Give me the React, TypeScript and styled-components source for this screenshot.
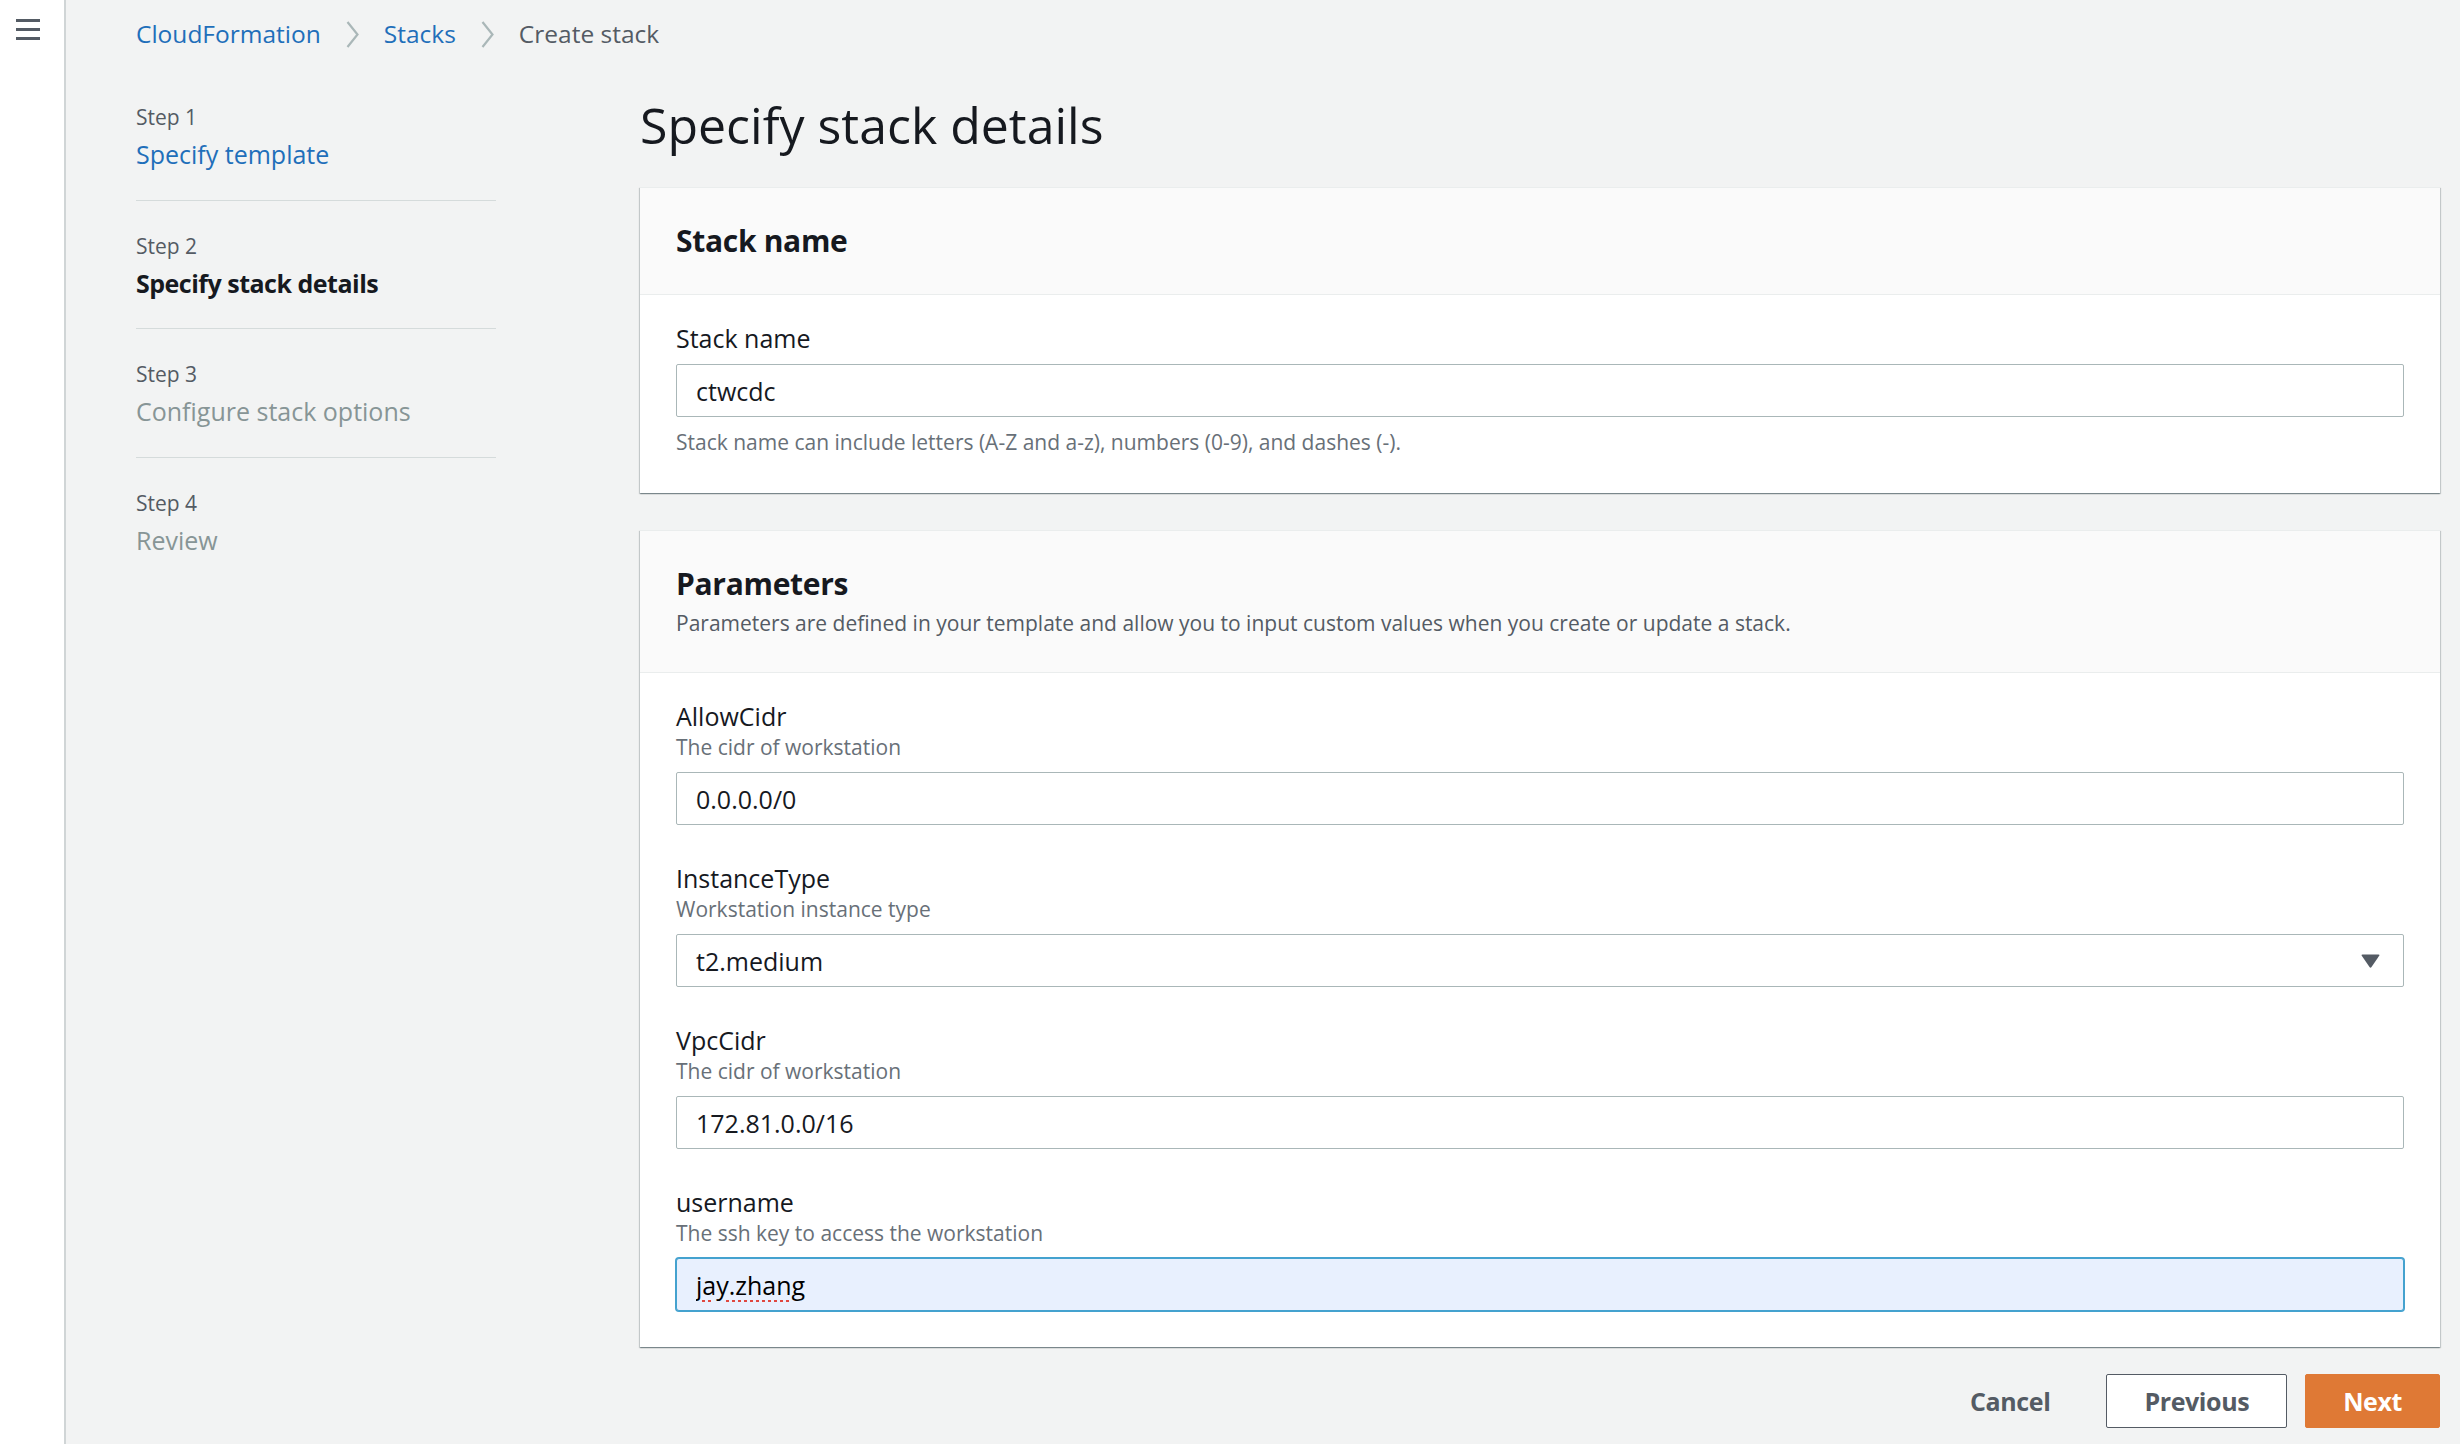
import React from 'react';
import styled, { createGlobalStyle, css } from 'styled-components';

const GlobalStyle = createGlobalStyle`
  html, body {
    margin: 0;
    padding: 0;
    background: #f2f3f3;
    overflow: hidden;
  }
  body {
    font-family: "Open Sans", "Noto Sans", "Liberation Sans", sans-serif;
    color: #16191f;
  }
  *, *::before, *::after { box-sizing: border-box; }
`;

const Shell = styled.div`
  display: flex;
  min-height: 100vh;
`;

const SideRail = styled.aside`
  flex: none;
  width: 66px;
  background: #ffffff;
  border-right: 2px solid #d0d5d6;
  padding: 18px 0 0 16px;
`;

const MenuButton = styled.button`
  display: block;
  padding: 0;
  margin: 0;
  border: 0;
  background: transparent;
  width: 24px;
  height: 22px;
  color: #545b64;
`;

const Main = styled.main`
  flex: 1;
  min-width: 0;
  padding: 16px 20px 0 70px;
`;

const Breadcrumbs = styled.nav`
  display: flex;
  align-items: center;
  gap: 25px;
  font-size: 24.5px;
  line-height: 36px;
  height: 36px;
`;

const Crumb = styled.a<{ $current?: boolean }>`
  text-decoration: none;
  color: ${(p) => (p.$current ? '#545b64' : '#1f6fba')};
`;

const Layout = styled.div`
  display: grid;
  grid-template-columns: 360px 1fr;
  column-gap: 144px;
  margin-top: 20px;
`;

const StepList = styled.ol`
  list-style: none;
  margin: 0;
  padding: 0;
`;

const StepItem = styled.li`
  padding: 29px 0 27.5px;
  border-bottom: 1px solid #d5dbdb;
  &:last-child { border-bottom: 0; }
`;

const StepLabel = styled.div`
  font-size: 21px;
  line-height: 32px;
  color: #545b64;
`;

type StepState = 'done' | 'current' | 'todo';

const StepTitle = styled.div<{ $state: StepState }>`
  margin-top: 3px;
  font-size: 25px;
  line-height: 36px;
  ${(p) =>
    p.$state === 'done'
      ? css`color: #1f6fba;`
      : p.$state === 'current'
      ? css`color: #16191f; font-weight: 700; letter-spacing: -0.5px;`
      : css`color: #879596;`}
`;

const Content = styled.section`
  min-width: 0;
`;

const PageTitle = styled.h1`
  margin: 25px 0 34px;
  font-size: 50px;
  line-height: 56px;
  font-weight: 400;
  color: #16191f;
`;

const Card = styled.div`
  background: #ffffff;
  border-top: 1px solid #eaeded;
  box-shadow: 0 1px 1px 0 rgba(0, 28, 36, 0.3), 1px 1px 1px 0 rgba(0, 28, 36, 0.15),
    -1px 1px 1px 0 rgba(0, 28, 36, 0.15);
  & + & { margin-top: 37px; }
`;

const CardHeader = styled.header`
  background: #fafafa;
  border-bottom: 1px solid #eaeded;
  padding: 33px 36px;
`;

const CardTitle = styled.h2`
  margin: 0;
  font-size: 30px;
  line-height: 40px;
  font-weight: 700;
  letter-spacing: -0.3px;
  color: #16191f;
`;

const CardDescription = styled.p`
  margin: 3px 0 0;
  font-size: 21px;
  line-height: 32px;
  color: #545b64;
`;

const CardBody = styled.div`
  display: flex;
  flex-direction: column;
  gap: 37px;
  padding: 27px 36px 36px;
`;

const Field = styled.div`
  display: flex;
  flex-direction: column;
`;

const FieldLabel = styled.label`
  font-size: 25px;
  line-height: 32px;
  color: #16191f;
`;

const FieldDescription = styled.div`
  font-size: 21px;
  line-height: 30px;
  color: #687078;
`;

const FieldHelp = styled.div`
  margin-top: 10px;
  font-size: 21px;
  line-height: 30px;
  color: #687078;
`;

const controlBase = css`
  margin-top: 10px;
  width: 100%;
  height: 53px;
  border: 1px solid #aab7b8;
  border-radius: 2px;
  background: #ffffff;
  font-family: inherit;
  font-size: 25px;
  color: #16191f;
  padding: 0 19px;
`;

const TextInput = styled.input<{ $focused?: boolean }>`
  ${controlBase}
  display: block;
  outline: none;
  ${(p) =>
    p.$focused &&
    css`
      background: #e8f0fe;
      border-color: #44a2cf;
      box-shadow: 0 0 0 1px #44a2cf;
      border-radius: 3px;
      color: #000;
      text-decoration: underline dotted #e0473f;
      text-decoration-thickness: 3px;
      text-underline-offset: 5px;
    `}
`;

const SelectBox = styled.div`
  ${controlBase}
  display: flex;
  align-items: center;
  justify-content: space-between;
  padding-right: 23px;
`;

const Actions = styled.div`
  display: flex;
  justify-content: flex-end;
  gap: 18px;
  margin-top: 27px;
`;

type Variant = 'link' | 'normal' | 'primary';

const Button = styled.button<{ $variant: Variant }>`
  height: 54px;
  padding: 0 37px;
  border-radius: 2px;
  border: 1px solid transparent;
  font-family: inherit;
  font-size: 25px;
  font-weight: 700;
  letter-spacing: -0.4px;
  line-height: 1;
  ${(p) =>
    p.$variant === 'link'
      ? css`background: transparent; color: #545b64;`
      : p.$variant === 'normal'
      ? css`background: #ffffff; color: #545b64; border-color: #545b64;`
      : css`background: #df7935; color: #ffffff; border-color: #df7935;`}
`;

const Chevron = () => (
  <svg width="13" height="27" viewBox="0 0 13 27" aria-hidden>
    <polyline points="1.5,1 11.5,13.5 1.5,26" fill="none" stroke="#aab7b8" strokeWidth="2.2" />
  </svg>
);

const Caret = () => (
  <svg width="19" height="14" viewBox="0 0 19 14" aria-hidden>
    <path d="M1.5 0.5 H17.5 Q19 0.5 18.2 1.8 L10.5 13 Q9.5 14.3 8.5 13 L0.8 1.8 Q0 0.5 1.5 0.5 Z" fill="#545b64" />
  </svg>
);

const steps: { label: string; title: string; state: StepState }[] = [
  { label: 'Step 1', title: 'Specify template', state: 'done' },
  { label: 'Step 2', title: 'Specify stack details', state: 'current' },
  { label: 'Step 3', title: 'Configure stack options', state: 'todo' },
  { label: 'Step 4', title: 'Review', state: 'todo' },
];

export default function App() {
  return (
    <>
      <GlobalStyle />
      <Shell>
        <SideRail>
          <MenuButton aria-label="Open navigation">
            <svg width="24" height="22" viewBox="0 0 24 22">
              <rect x="0" y="1" width="24" height="3" fill="currentColor" />
              <rect x="0" y="10" width="24" height="3" fill="currentColor" />
              <rect x="0" y="19" width="24" height="3" fill="currentColor" />
            </svg>
          </MenuButton>
        </SideRail>
        <Main>
          <Breadcrumbs>
            <Crumb href="#">CloudFormation</Crumb>
            <Chevron />
            <Crumb href="#">Stacks</Crumb>
            <Chevron />
            <Crumb $current>Create stack</Crumb>
          </Breadcrumbs>
          <Layout>
            <StepList>
              {steps.map((s) => (
                <StepItem key={s.label}>
                  <StepLabel>{s.label}</StepLabel>
                  <StepTitle $state={s.state}>{s.title}</StepTitle>
                </StepItem>
              ))}
            </StepList>
            <Content>
              <PageTitle>Specify stack details</PageTitle>
              <Card>
                <CardHeader>
                  <CardTitle>Stack name</CardTitle>
                </CardHeader>
                <CardBody>
                  <Field>
                    <FieldLabel>Stack name</FieldLabel>
                    <TextInput readOnly value="ctwcdc" />
                    <FieldHelp>
                      Stack name can include letters (A-Z and a-z), numbers (0-9), and dashes (-).
                    </FieldHelp>
                  </Field>
                </CardBody>
              </Card>
              <Card>
                <CardHeader>
                  <CardTitle>Parameters</CardTitle>
                  <CardDescription>
                    Parameters are defined in your template and allow you to input custom values when you
                    create or update a stack.
                  </CardDescription>
                </CardHeader>
                <CardBody>
                  <Field>
                    <FieldLabel>AllowCidr</FieldLabel>
                    <FieldDescription>The cidr of workstation</FieldDescription>
                    <TextInput readOnly value="0.0.0.0/0" />
                  </Field>
                  <Field>
                    <FieldLabel>InstanceType</FieldLabel>
                    <FieldDescription>Workstation instance type</FieldDescription>
                    <SelectBox>
                      <span>t2.medium</span>
                      <Caret />
                    </SelectBox>
                  </Field>
                  <Field>
                    <FieldLabel>VpcCidr</FieldLabel>
                    <FieldDescription>The cidr of workstation</FieldDescription>
                    <TextInput readOnly value="172.81.0.0/16" />
                  </Field>
                  <Field>
                    <FieldLabel>username</FieldLabel>
                    <FieldDescription>The ssh key to access the workstation</FieldDescription>
                    <TextInput readOnly $focused value="jay.zhang" />
                  </Field>
                </CardBody>
              </Card>
              <Actions>
                <Button $variant="link">Cancel</Button>
                <Button $variant="normal">Previous</Button>
                <Button $variant="primary">Next</Button>
              </Actions>
            </Content>
          </Layout>
        </Main>
      </Shell>
    </>
  );
}
